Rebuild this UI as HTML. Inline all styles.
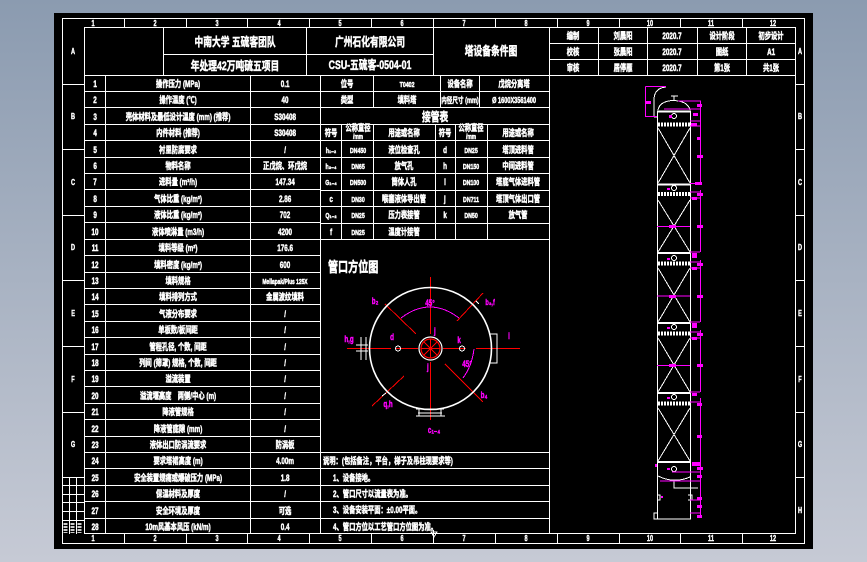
<!DOCTYPE html>
<html><head><meta charset="utf-8"><style>
html,body{margin:0;padding:0;width:867px;height:562px;overflow:hidden;background:linear-gradient(#8b9bb0,#c6cad5)}
svg{position:absolute;left:0;top:0}
.w{stroke:#fff;stroke-width:1;fill:none;shape-rendering:crispEdges}
.r{stroke:#f00;stroke-width:1;fill:none;shape-rendering:crispEdges}
.m{stroke:#f0f;stroke-width:1;fill:none;shape-rendering:crispEdges}
.wa{stroke:#fff;stroke-width:1;fill:none;shape-rendering:crispEdges}
text{font-family:"Liberation Sans","Noto Sans CJK SC",sans-serif;fill:#fff;stroke:#fff;stroke-width:.5;font-size:9px;font-weight:bold;text-anchor:middle;transform-box:fill-box;transform-origin:center;transform:scaleX(.7)}
.s{font-size:8px;stroke-width:.4}.st{text-anchor:start;transform-origin:left center}
.t{font-size:12px;transform:scaleX(.73)}
.n{font-size:7.5px}
.p{fill:#f0f;stroke:#f0f;font-size:9px;stroke-width:.4}
</style></head><body>
<svg width="867" height="562" viewBox="0 0 867 562">
<rect x="54" y="13" width="759" height="536" fill="#000"/>
<rect class="w" x="62.5" y="18.5" width="742" height="525"/>
<rect class="w" x="84.5" y="27.5" width="711" height="506"/>
<path class="w" d="M124.5 18V27M186.5 18V27M247.5 18V27M309.5 18V27M371.5 18V27M433.5 18V27M495.5 18V27M557.5 18V27M619.5 18V27M680.5 18V27M742.5 18V27
M124.5 534V543M186.5 534V543M247.5 534V543M309.5 534V543M371.5 534V543M433.5 534V543M495.5 534V543M557.5 534V543M619.5 534V543M680.5 534V543M742.5 534V543
M62 84.5H84M62 149.5H84M62 215.5H84M62 280.5H84M62 346.5H84M62 412.5H84M62 477.5H84
M796 84.5H805M796 149.5H805M796 215.5H805M796 280.5H805M796 346.5H805M796 412.5H805M796 477.5H805
M69.5 477V534M76.5 477V534M62 485.5H84M62 494.5H84M62 502.5H84M62 511.5H84M62 520.5H84
M84 75.5H549M163.5 27V75M306.5 27V75M433.5 27V75M549.5 27V534M163 54.5H433
M549 43.5H796M549 59.5H796M549 75.5H796M598.5 27V75M647.5 27V75M697.5 27V75M746.5 27V75
M105.5 75V534M250.5 75V534M320.5 75V534
M84 91.5H320M84 107.5H320M84 124.5H320M84 140.5H320M84 157.5H320M84 173.5H320M84 189.5H320M84 206.5H320M84 222.5H320M84 239.5H320M84 255.5H320M84 272.5H320M84 288.5H320M84 304.5H320M84 321.5H320M84 337.5H320M84 354.5H320M84 370.5H320M84 386.5H320M84 403.5H320M84 419.5H320M84 436.5H320M84 452.5H320M84 468.5H320M84 485.5H320M84 501.5H320M84 518.5H320
M320 91.5H549M320 107.5H549M320 124.5H549M320 140.5H549M320 157.5H549M320 173.5H549M320 190.5H549M320 206.5H549M320 223.5H549M320 239.5H549
M373.5 75V107M440.5 75V107M479.5 75V107M341.5 124V239M373.5 124V239M435.5 124V239M455.5 124V239M487.5 124V239
M320 452.5H549M320 468.5H549M320 485.5H549M320 501.5H549M320 518.5H549"/>
<path d="M65.5 523V533M72.5 523V533M79.5 523V533" style="stroke:#fff;stroke-width:4;stroke-dasharray:2 1;fill:none;opacity:.8"/>

<text class="s" x="93" y="26">1</text><text class="s" x="155" y="26">2</text><text class="s" x="217" y="26">3</text><text class="s" x="279" y="26">4</text><text class="s" x="340" y="26">5</text><text class="s" x="402" y="26">6</text><text class="s" x="464" y="26">7</text><text class="s" x="526" y="26">8</text><text class="s" x="588" y="26">9</text><text class="s" x="650" y="26">10</text><text class="s" x="711" y="26">11</text><text class="s" x="773" y="26">12</text>
<text class="s" x="93" y="541">1</text><text class="s" x="155" y="541">2</text><text class="s" x="217" y="541">3</text><text class="s" x="279" y="541">4</text><text class="s" x="340" y="541">5</text><text class="s" x="402" y="541">6</text><text class="s" x="464" y="541">7</text><text class="s" x="526" y="541">8</text><text class="s" x="588" y="541">9</text><text class="s" x="650" y="541">10</text><text class="s" x="711" y="541">11</text><text class="s" x="773" y="541">12</text>
<text class="s" x="73" y="54">A</text><text class="s" x="73" y="119">B</text><text class="s" x="73" y="185">C</text><text class="s" x="73" y="250">D</text><text class="s" x="73" y="316">E</text><text class="s" x="73" y="382">F</text><text class="s" x="73" y="447">G</text>
<text class="s" x="800" y="54">A</text><text class="s" x="800" y="119">B</text><text class="s" x="800" y="185">C</text><text class="s" x="800" y="250">D</text><text class="s" x="800" y="316">E</text><text class="s" x="800" y="382">F</text><text class="s" x="800" y="447">G</text><text class="s" x="800" y="513">H</text>

<text class="t" x="235" y="46">中南大学 五硫客团队</text>
<text class="t" x="235" y="70">年处理42万吨硫五项目</text>
<text class="t" x="370" y="46">广州石化有限公司</text>
<text class="t" x="370" y="69">CSU-五硫客-0504-01</text>
<text class="t" x="491" y="55">塔设备条件图</text>

<text x="573" y="39">编制</text><text x="623" y="39">刘晨阳</text><text x="672" y="39">2020.7</text><text x="722" y="39">设计阶段</text><text x="771" y="39">初步设计</text>
<text x="573" y="55">校核</text><text x="623" y="55">张晨阳</text><text x="672" y="55">2020.7</text><text x="722" y="55">图纸</text><text x="771" y="55">A1</text>
<text x="573" y="71">审核</text><text x="623" y="71">居停雁</text><text x="672" y="71">2020.7</text><text x="722" y="71">第1张</text><text x="771" y="71">共1张</text>

<text x="95" y="87">1</text><text x="178" y="87">操作压力 (MPa)</text><text x="285" y="87">0.1</text>
<text x="95" y="103">2</text><text x="178" y="103">操作温度 (℃)</text><text x="285" y="103">40</text>
<text x="95" y="120">3</text><text x="178" y="120">壳体材料及最低设计温度 (mm) (推荐)</text><text x="285" y="120">S30408</text>
<text x="95" y="136">4</text><text x="178" y="136">内件材料 (推荐)</text><text x="285" y="136">S30408</text>
<text x="95" y="153">5</text><text x="178" y="153">衬里防腐要求</text><text x="285" y="153">/</text>
<text x="95" y="169">6</text><text x="178" y="169">物料名称</text><text x="285" y="169">正戊烷、环戊烷</text>
<text x="95" y="185">7</text><text x="178" y="185">进料量 (m³/h)</text><text x="285" y="185">147.34</text>
<text x="95" y="202">8</text><text x="178" y="202">气体比重 (kg/m³)</text><text x="285" y="202">2.86</text>
<text x="95" y="218">9</text><text x="178" y="218">液体比重 (kg/m³)</text><text x="285" y="218">702</text>
<text x="95" y="235">10</text><text x="178" y="235">液体喷淋量 (m3/h)</text><text x="285" y="235">4200</text>
<text x="95" y="251">11</text><text x="178" y="251">填料等级 (m²)</text><text x="285" y="251">176.6</text>
<text x="95" y="268">12</text><text x="178" y="268">填料密度 (kg/m³)</text><text x="285" y="268">600</text>
<text x="95" y="284">13</text><text x="178" y="284">填料规格</text><text x="285" y="284" style="font-size:7px">Mellapak/Plus 125X</text>
<text x="95" y="300">14</text><text x="178" y="300">填料排列方式</text><text x="285" y="300">金属波纹填料</text>
<text x="95" y="317">15</text><text x="178" y="317">气液分布要求</text><text x="285" y="317">/</text>
<text x="95" y="333">16</text><text x="178" y="333">单板数/板间距</text><text x="285" y="333">/</text>
<text x="95" y="350">17</text><text x="178" y="350">管程孔径, 个数, 间距</text><text x="285" y="350">/</text>
<text x="95" y="366">18</text><text x="178" y="366">列间 (筛罩) 规格, 个数, 间距</text><text x="285" y="366">/</text>
<text x="95" y="382">19</text><text x="178" y="382">溢流装置</text><text x="285" y="382">/</text>
<text x="95" y="399">20</text><text x="178" y="399">溢流堰高度　两侧/中心 (m)</text><text x="285" y="399">/</text>
<text x="95" y="415">21</text><text x="178" y="415">降液管规格</text><text x="285" y="415">/</text>
<text x="95" y="432">22</text><text x="178" y="432">降液管底隙 (mm)</text><text x="285" y="432">/</text>
<text x="95" y="448">23</text><text x="178" y="448">液体出口防涡流要求</text><text x="285" y="448">防涡板</text>
<text x="95" y="464">24</text><text x="178" y="464">要求塔裙高度 (m)</text><text x="285" y="464">4.00m</text>
<text x="95" y="481">25</text><text x="178" y="481">安全装置规痛或爆破压力 (MPa)</text><text x="285" y="481">1.8</text>
<text x="95" y="497">26</text><text x="178" y="497">保温材料及厚度</text><text x="285" y="497">/</text>
<text x="95" y="514">27</text><text x="178" y="514">安全环境及厚度</text><text x="285" y="514">可选</text>
<text x="95" y="530">28</text><text x="178" y="530">10m风基本风压 (kN/m)</text><text x="285" y="530">0.4</text>

<text x="347" y="87">位号</text><text class="n" x="407" y="87">T0402</text><text x="460" y="87">设备名称</text><text x="514" y="87">戊烷分离塔</text>
<text x="347" y="103">类型</text><text x="407" y="103">填料塔</text><text x="460" y="103" style="font-size:8px">内径尺寸 (mm)</text><text x="514" y="103" style="font-size:8px">Ø 1600X3561400</text>
<text class="t" x="435" y="121">接管表</text>
<text x="331" y="136">符号</text><text x="358" y="131">公称直径</text><text x="358" y="139" style="font-size:7px">/mm</text><text x="404" y="136">用途或名称</text>
<text x="445" y="136">符号</text><text x="471" y="131">公称直径</text><text x="471" y="139" style="font-size:7px">/mm</text><text x="518" y="136">用途或名称</text>
<text class="n" x="331" y="153">h₁₋₂</text><text class="n" x="358" y="153">DN450</text><text x="404" y="153">液位检查孔</text><text x="445" y="153">d</text><text class="n" x="471" y="153">DN25</text><text x="518" y="153">塔顶进料管</text>
<text class="n" x="331" y="169">h₃₋₄</text><text class="n" x="358" y="169">DN65</text><text x="404" y="169">放气孔</text><text x="445" y="169">h</text><text class="n" x="471" y="169">DN150</text><text x="518" y="169">中间进料管</text>
<text class="n" x="331" y="185">G₁₋₄</text><text class="n" x="358" y="185">DN500</text><text x="404" y="185">筒体人孔</text><text x="445" y="185">i</text><text class="n" x="471" y="185">DN100</text><text x="518" y="185">塔底气体进料管</text>
<text x="331" y="202">c</text><text class="n" x="358" y="202">DN30</text><text x="404" y="202">喉塞液体导出管</text><text x="445" y="202">j</text><text class="n" x="471" y="202">DN711</text><text x="518" y="202">塔顶气体出口管</text>
<text class="n" x="331" y="218">Q₁₋₂</text><text class="n" x="358" y="218">DN25</text><text x="404" y="218">压力表接管</text><text x="445" y="218">k</text><text class="n" x="471" y="218">DN50</text><text x="518" y="218">放气管</text>
<text x="331" y="235">f</text><text class="n" x="358" y="235">DN25</text><text x="404" y="235">温度计接管</text>

<text x="328" y="272" class="st" style="font-size:14px;transform:scaleX(.72)">管口方位图</text>
<text x="323" y="464" class="st">说明：(包括备注，平台，梯子及吊柱现要求等)</text>
<text x="333" y="481" class="st">1、设备接地。</text>
<text x="333" y="497" class="st">2、管口尺寸以流量表为准。</text>
<text x="333" y="513" class="st">3、设备安装平面：±0.00平面。</text>
<text x="333" y="530" class="st">4、管口方位以工艺管口方位图为准。</text>
<path class="wa" d="M431 532H437L434 537ZM433.5 530V534"/>

<!-- orientation diagram -->
<g>
<path class="r" d="M430.5 277V334M430.5 362V420M347 348.5H391M396 348.5H418M443 348.5H466M476 348.5H520"/>
<path class="r" d="M483 293L457 321M404 376L372 406M385 304L416 334M445 364L483 402"/>
<path class="m" d="M401 318Q430 296 459 318M463 378Q472 366 474 349"/>
<circle cx="430.5" cy="348.5" r="61" style="fill:none;stroke:#fff;stroke-width:1.6"/>
<circle cx="430.5" cy="348.5" r="11.5" style="fill:none;stroke:#fff;stroke-width:1.2"/>
<circle cx="430.5" cy="348.5" r="9.5" style="fill:none;stroke:#f00;stroke-width:1.2"/>
<path class="r" d="M424 342L437 355M437 342L424 355M430.5 339V358M421 348.5H440"/>
<path class="wa" d="M361 337V360M366 337V360M356 345H368M356 351H368M490 334H497V363H490"/>
<path class="wa" d="M416 409H444M418 413H442M419 409V416M441 409V416M416 416H445"/>
<circle cx="398" cy="348.5" r="2.5" class="wa"/><circle cx="462" cy="348.5" r="2.5" class="wa"/>
<path class="wa" d="M382 396L386 393M476 301L479 304"/>
<text class="p" x="375" y="304">b₂</text><text class="p" x="490" y="305" style="font-size:8px">b₃,f</text>
<text class="p" x="349" y="342">h,g</text><text class="p" x="392" y="340">d</text><text class="p" x="459" y="343">k</text>
<text class="p" x="509" y="339">i</text><text class="p" x="467" y="367">45°</text><text class="p" x="484" y="398">b₄</text>
<text class="p" x="388" y="407">q,h</text><text class="p" x="434" y="433">c₁₋₄</text><text class="p" x="430" y="306">45°</text>
<text class="p" x="435" y="334">j</text><text class="p" x="428" y="370">j</text>
</g>

<!-- tower -->
<g>
<path class="wa" d="M657.5 112V519M690.5 112V519M666 87Q654 88 654 100V117M654 117H657"/>
<path class="wa" d="M658 110Q660 101 673 100.5Q688 101 690 110M674 100V96M671 96H678"/>
<path d="M657 111.5H691M657 184.5H691M657 253H691M657 323H691M657 393H691M657 462H691" style="stroke:#fff;stroke-width:2;fill:none;shape-rendering:crispEdges"/>
<path d="M658 124.5H690M658 194H690M658 263.5H690M658 333.5H690M658 403.5H690" style="stroke:#fff;stroke-width:4;stroke-dasharray:2 1;fill:none;shape-rendering:crispEdges"/>
<path class="wa" d="M658 128L690 183M690 128L658 183M658 200L690 252M690 200L658 252M658 268L690 322M690 268L658 322M658 338L690 392M690 338L658 392M658 408L690 461M690 408L658 461"/>
<circle cx="674" cy="116" r="2.5" class="wa"/><circle cx="674" cy="188" r="2.5" class="wa"/><circle cx="674" cy="258" r="2.5" class="wa"/><circle cx="674" cy="327" r="2.5" class="wa"/><circle cx="674" cy="397" r="2.5" class="wa"/><circle cx="674" cy="469" r="2.5" class="wa"/>
<path class="wa" d="M658 476Q674 484 690 477M674 480V488H698M675 488H694M657 495H660V500H657M688 495H692V500H688M657 513H654V519H691"/>
<path class="m" d="M645.5 86.5H666M645.5 86.5V116.5H657M700.5 101V183M678 101H701M664 109H701M690 121H701M690 126H701M690 183.5H700"/>
<path class="m" d="M700.5 190V252M700.5 260V322M700.5 330V392M700.5 398V515M690 192H701M690 198H701M690 252H700M690 262H701M690 268H701M690 322H700M690 332H701M690 338H701M690 392H700M690 402H701M672 472H700M660 481H701M690 513H701M690 500H701M657 226.5H690M657 296H690M657 365.5H690"/>
<path d="M645 101h6v3h-6zM697 104h5v3h-5zM697 155h6v3h-6zM697 137h4v3h-4zM693 113h5v3h-5zM695 182h7v3h-7zM691 123h6v3h-6zM669 225h7v3h-7zM669 295h7v3h-7zM669 364h7v3h-7zM697 225h6v3h-6zM697 295h6v3h-6zM697 364h6v3h-6zM697 193h6v3h-6zM697 263h6v3h-6zM697 333h6v3h-6zM692 253h5v5h-5zM692 323h5v5h-5zM692 393h5v3h-5zM692 197h5v3h-5zM692 267h5v3h-5zM692 337h5v3h-5zM669 115h3v3h-3zM667 188h3v2h-3zM667 258h3v2h-3zM667 327h3v2h-3zM667 397h3v2h-3zM667 468h3v2h-3zM692 462h8v4h-8zM697 403h5v3h-5zM697 435h5v3h-5zM697 467h6v3h-6zM697 475h5v3h-5zM697 497h5v3h-5zM697 505h5v3h-5zM697 515h5v3h-5zM655 464h2v3h-2zM661 496h2v2h-2z" fill="#f0f"/>
</g>
</svg>
</body></html>
